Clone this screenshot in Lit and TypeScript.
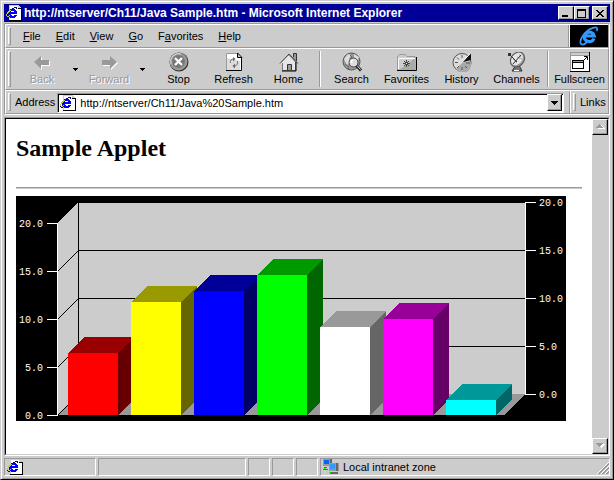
import { LitElement, html, svg, css, nothing } from "lit";
import { customElement } from "lit/decorators.js";

const pageIcon = html`<svg class="i16" viewBox="0 0 16 16" aria-hidden="true">
  <path d="M3 0H12L15 3V16H3Z" fill="#fff"/>
  <path d="M3.500 16V.5H12" fill="none" stroke="#ccc" shape-rendering="crispEdges"/>
  <path d="M3 15.500H15.500V3M12 .5V3.500H15" fill="none" stroke="#000" shape-rendering="crispEdges"/>
  <path d="M12 0H13V1H14V2H15V3H12Z" fill="#ccc" shape-rendering="crispEdges"/>
  <g shape-rendering="crispEdges">
    <path d="M4 4H9V5H10V6H11V9H5V10H6V11H8V10H11V11H10V12H9V13H4V12H3V11H2V6H3V5H4ZM5 6V7H8V6Z" fill="#00f" fill-rule="evenodd"/>
    <path d="M6 3H8V2H11V4H10V3H8V4H6ZM1 7H2V9H1ZM0 9H1V12H0ZM1 12H3V13H1Z" fill="#009"/>
    <path d="M3 5H5V6H4V7H3V8H2V9H1V11H0V9H1V7H2V6H3ZM1 11H3V12H1ZM3 10H4V11H3Z" fill="#cc3"/>
  </g>
</svg>`;

const icons: Record<string, unknown> = {
  Back: svg`<path d="M2 10 9 4V8H17V13H9V17Z" fill="#fff" transform="translate(1 1)"/><path d="M2 10 9 4V8H17V13H9V17Z" fill="#999"/>`,
  Forward: svg`<path d="M18 10 11 4V8H3V13H11V17Z" fill="#fff" transform="translate(1 1)"/><path d="M18 10 11 4V8H3V13H11V17Z" fill="#999"/>`,
  Stop: svg`<circle cx="10" cy="10" r="9.500" fill="#333"/>
    <circle cx="9.500" cy="9.500" r="9" fill="#999"/>
    <circle cx="9.500" cy="9.500" r="6.500" fill="#777"/>
    <path d="M2 12A8 8 0 0 1 12 2" fill="none" stroke="#ddd"/>
    <path d="M6 6 13 13M13 6 6 13" stroke="#fff" stroke-width="2.300"/>`,
  Refresh: svg`<path d="M2 1H13L18 6V19H2Z" fill="#fff"/><path d="M3 18V6L16 9V18Z" fill="#ddd"/>
    <path d="M2.500 19V1.500H13" fill="none" stroke="#999"/><path d="M13.500 1V5.500H18Z" fill="#ccc" stroke="#000"/>
    <path d="M17.500 5.500V18.500H2" fill="none" stroke="#000"/>
    <path d="M6.500 11C6 8 7 7 10 7M13.500 9C14 12 13 14 10 14" fill="none" stroke="#777"/>
    <path d="M9 5 11.500 7 9 9.500ZM11 11.500 8.500 14 11 16.500Z" fill="#666"/>`,
  Home: svg`<path d="M14 1H17V9H14Z" fill="#999"/><path d="M14.500 5V1.500H17.500V9" fill="none" stroke="#333"/>
    <path d="M3.500 10 10 3 16.500 10V18.500H3.500Z" fill="#e6e6e6" stroke="#777"/>
    <path d="M1 11.500 10 2 19 11.500" fill="none" stroke="#444"/>
    <path d="M2.500 11.500 10 3.500" stroke="#fff"/><path d="M17 10V19H3" fill="none" stroke="#000"/>
    <path d="M8.500 18V12.500H12.500V18" fill="#999" stroke="#333"/>`,
  Search: svg`<circle cx="9.500" cy="9.500" r="8.500" fill="#999" stroke="#555"/>
    <path d="M2 7 6 2 9 3 7 7 9 10 5 13ZM12 2 17 5 16 8 12 6Z" fill="#ddd"/>
    <path d="M8 3 10 5 8 8 11 9M3 12 7 15 6 18" fill="none" stroke="#666"/>
    <circle cx="11.500" cy="10.500" r="4.500" fill="#ddd" stroke="#444"/>
    <path d="M9.500 11V9L11 8" fill="none" stroke="#fff" stroke-width="1.500"/>
    <path d="M14.500 13.500 19 18.500" stroke="#222" stroke-width="3"/><path d="M15 13.500 18.500 17.500" stroke="#eee"/>`,
  Favorites: svg`<path d="M.5 18V4.500L2.500 2.500H8L10 4.500H18V18Z" fill="#ccc" stroke="#999"/>
    <path d="M2 18 18 6V18Z" fill="#aaa"/><path d="M1.500 17V6.500H18" fill="none" stroke="#fff"/>
    <path d="M0 18.500H19.500V5" fill="none" stroke="#000"/>
    <path d="M9.500 8V15M6 11.500H13M7 9 12 14M12 9 7 14" stroke="#444"/><rect x="9" y="11" width="1" height="1" fill="#fff"/>`,
  History: svg`<circle cx="10" cy="10.500" r="9" fill="#ddd" stroke="#555"/>
    <path d="M4 17A8 8 0 0 0 18 9L10 11Z" fill="#aaa"/>
    <path d="M10 3V6M3 10.500H6M10 15V18M14 11H18M5 5.500 7 7.500M5 16 7 14M15 16 13 14" stroke="#555"/>
    <path d="M10 10.500 19 1.500V8Z" fill="#111"/><path d="M10 10.500 18 1.500" stroke="#fff"/>`,
  Channels: svg`<path d="M9 13H12L15 19H5Z" fill="#777" stroke="#333"/><path d="M7 18.500H12" stroke="#fff"/>
    <ellipse cx="10.500" cy="7.500" rx="8" ry="6.500" transform="rotate(-50 10.500 7.500)" fill="#999" stroke="#555"/>
    <ellipse cx="10" cy="7" rx="7" ry="5" transform="rotate(-50 10 7)" fill="#e6e6e6"/>
    <path d="M12 2 14 5M6 7 10 11M10 5 15 7" stroke="#aaa"/>
    <path d="M2.500 2.500 10 10M6 12 14 3" stroke="#333"/><rect x="1" y="1" width="3" height="3" fill="#333"/>`,
  Fullscreen: svg`<g shape-rendering="crispEdges"><rect width="20" height="20" fill="#000"/><rect width="19" height="19" fill="#999"/>
    <rect x="1" y="4" width="18" height="15" fill="#fff"/><rect x="1" y="1" width="18" height="2" fill="#ccc"/>
    <rect x="2" y="8" width="12" height="9" fill="#000"/><rect x="3" y="11" width="10" height="5" fill="#fff"/><rect x="3" y="9" width="10" height="1" fill="#999"/></g>
    <path d="M13 9 17 5M14 4.500H17.500V8" fill="none" stroke="#000"/>`,
};

const menu = [["", "F", "ile"], ["", "E", "dit"], ["", "V", "iew"], ["", "G", "o"], ["F", "a", "vorites"], ["", "H", "elp"]];

const bars = [
  { top: 157, front: "#f00", lid: "#900", side: "#600" },
  { top: 106, front: "#ff0", lid: "#990", side: "#660" },
  { top: 95, front: "#00f", lid: "#009", side: "#006" },
  { top: 79, front: "#0f0", lid: "#090", side: "#060" },
  { top: 131, front: "#fff", lid: "#999", side: "#666" },
  { top: 123, front: "#f0f", lid: "#909", side: "#606" },
  { top: 204, front: "#0ff", lid: "#099", side: "#066" },
];

@customElement("bar-chart")
class BarChart extends LitElement {
  static styles = css`
    :host { display: block; max-width: 550px; }
    .chart { display: block; width: 100%; background: #000; }
    .num { font: 10px "Liberation Mono", monospace; fill: #fff; }
    .end { text-anchor: end; }
  `;
  render() {
    return html`<svg class="chart" viewBox="0 0 550 225" role="img" aria-label="Bar chart">
      <g shape-rendering="crispEdges">
        <path d="M41 27 62 7H509V198L488 219H41Z" fill="#ccc"/>
        <path d="M41 219 62 198H509L488 219Z" fill="#999"/>
        <path d="M62.500 7V198" stroke="#000" fill="none"/>
      </g>
      <path d="M41.500 219.500 62.500 198.500" stroke="#000"/>
      ${[0, 1, 2, 3, 4].map((n) => {
        const y = 219 - n * 48;
        const label = `${n * 5}.0`;
        return svg`
          ${n > 0 && n < 4 ? svg`<path d="M41.500 ${y + 0.5} 62.500 ${y - 20.5}H509" stroke="#000" fill="none"/>` : nothing}
          <rect x="31" y=${y} width="11" height="1" fill="#fff"/>
          <rect x="509" y=${y - 21} width="11" height="1" fill="#fff"/>
          <text class="num end" x="27" y=${y + 4}>${label}</text>
          <text class="num" x="523" y=${y - 17}>${label}</text>`;
      })}
      <path d="M41.500 27V219M509.500 6V199" stroke="#fff" shape-rendering="crispEdges"/>
      <g shape-rendering="crispEdges">${bars.map((b, i) => {
        const x = 52 + i * 63;
        return svg`
          <path d="M${x} ${b.top}l16 -16h50l-16 16z" fill=${b.lid}/>
          <path d="M${x + 50} ${b.top}l16 -16V203l-16 16z" fill=${b.side}/>
          <rect x=${x} y=${b.top} width="50" height=${219 - b.top} fill=${b.front}/>`;
      })}</g>
    </svg>`;
  }
}

@customElement("app-root")
class AppRoot extends LitElement {
  static styles = css`
    :host { display: block; font: 11px/14px "Liberation Sans", Arial, sans-serif; color: #000; }
    * { box-sizing: border-box; }
    button { font: inherit; color: inherit; background: none; border: 0; padding: 0; margin: 0; flex: none; }
    svg { flex: none; display: block; }
    .window { min-height: 100vh; display: flex; flex-direction: column; background: #ccc; padding: 3px; overflow: hidden;
      border: 1px solid; border-color: #ccc #000 #000 #ccc; box-shadow: inset 1px 1px #fff, inset -1px -1px #999; }
    .title { height: 18px; display: flex; align-items: center; background: #009; color: #fff; padding: 0 2px; gap: 2px; }
    .title h1 { flex: 1; min-width: 0; margin: 0; font: bold 12px/16px "Liberation Sans", Arial, sans-serif; white-space: nowrap; overflow: hidden; }
    .i16 { width: 16px; height: 16px; }
    .controls { display: flex; }
    .raised { background: #ccc; border: 1px solid; border-color: #fff #000 #000 #fff; box-shadow: inset -1px -1px #999;
      display: flex; align-items: center; justify-content: center; }
    .control { width: 16px; height: 14px; }
    .close { margin-left: 2px; }
    .bands { margin-top: 1px; border: 1px solid; border-color: #999 #fff #fff #999; }
    .band { display: flex; align-items: stretch; border: 1px solid; border-color: #fff #999 #999 #fff; height: 24px; }
    .tools { height: 42px; }
    .grip { flex: none; width: 3px; margin: 2px; border: 1px solid; border-color: #fff #999 #999 #fff; }
    .menu { flex: 1; display: flex; align-items: center; gap: 1px; padding-left: 3px; }
    .menu button { padding: 0 7px; }
    .logo { width: 40px; border: 1px solid #999; border-width: 0 0 0 1px; background: #000; box-shadow: inset 1px 0 #fff; display: flex; justify-content: center; align-items: center; }
    .tool { width: 55px; display: flex; flex-direction: column; align-items: center; padding-top: 3px; }
    .tool svg { width: 20px; height: 20px; }
    .nav { width: 50px; }
    .off { color: #999; text-shadow: 1px 1px #fff; }
    .tools .grip { margin-right: 6px; }
    .caret { width: 17px; display: flex; align-items: center; justify-content: center; }
    .rule { flex: none; width: 2px; margin: 2px 3px; background: #fff; border-left: 1px solid #999; }
    .address { flex: 1; min-width: 0; display: flex; align-items: center; padding-right: 5px; }
    .address label { margin: 0 2px; }
    .field { flex: 1; min-width: 0; height: 20px; margin-top: 1px; display: flex; align-items: center; background: #fff; padding: 0 1px 0 2px;
      border: 1px solid; border-color: #999 #fff #fff #999; box-shadow: inset 1px 1px #000; }
    .field input { flex: 1; min-width: 0; font: inherit; border: 0; padding: 0 0 0 4px; background: transparent; outline: 0; }
    .drop { width: 15px; height: 17px; }
    .links { width: 39px; display: flex; align-items: center; align-self: stretch; border-left: 1px solid #999; box-shadow: inset 1px 0 #fff; padding-left: 1px; }
    .links .grip { align-self: stretch; }
    .links button { margin-left: 2px; }
    .view { flex: 1; margin-top: 2px; display: flex; background: #fff; border: 1px solid; border-color: #999 #fff #fff #999; }
    .inner { flex: 1; min-width: 0; display: flex; border: 1px solid; border-color: #000 #ccc #ccc #000; }
    .doc { flex: 1; min-width: 0; padding: 15px 10px 10px; }
    .doc h2 { margin: 0; font: bold 24px/28px "Liberation Serif", "Times New Roman", serif; }
    .doc hr { margin: 25px 0 7px; height: 2px; border: 0; border-top: 1px solid #999; background: #ccc; }
    .scroll { flex: none; width: 16px; background: #ccc; display: flex; flex-direction: column; justify-content: space-between; }
    .scroll button { width: 16px; height: 16px; }
    .status { margin-top: 2px; height: 18px; display: flex; gap: 2px; }
    .cell { border: 1px solid; border-color: #999 #fff #fff #999; width: 22px; display: flex; align-items: center; padding-left: 2px; gap: 4px; }
    .first { width: 92px; }
    .message { width: 148px; }
    .zone { flex: 1; }
    .zone span { flex: 1; }
  `;

  tool(name: string, off = false) {
    return html`<button class="tool ${off ? "off nav" : ""}" ?disabled=${off}>
      <svg viewBox="0 0 20 20" aria-hidden="true">${icons[name]}</svg><span>${name}</span>
    </button>`;
  }

  caret(label: string) {
    return html`<button class="caret" aria-label=${label}><svg width="5" height="3" shape-rendering="crispEdges"><path d="M0 0H5V1H4V2H3V3H2V2H1V1H0Z"/></svg></button>`;
  }

  render() {
    return html`<div class="window">
      <header class="title">
        ${pageIcon}
        <h1>http://ntserver/Ch11/Java Sample.htm - Microsoft Internet Explorer</h1>
        <div class="controls">
          <button class="raised control" aria-label="Minimize"><svg width="10" height="9" shape-rendering="crispEdges"><path d="M1 6H7V8H1Z"/></svg></button>
          <button class="raised control" aria-label="Maximize"><svg width="10" height="9" shape-rendering="crispEdges"><path d="M0 0H9V9H0ZM1 2V8H8V2Z" fill-rule="evenodd"/></svg></button>
          <button class="raised control close" aria-label="Close"><svg width="8" height="7" shape-rendering="crispEdges"><path d="M0 0H2V1H3V2H5V1H6V0H8V1H7V2H6V3H5V4H6V5H7V6H8V7H6V6H5V5H3V6H2V7H0V6H1V5H2V4H3V3H2V2H1V1H0Z"/></svg></button>
        </div>
      </header>
      <div class="bands">
        <div class="band">
          <div class="grip"></div>
          <nav class="menu">${menu.map(([a, k, b]) => html`<button>${a}<u>${k}</u>${b}</button>`)}</nav>
          <div class="logo"><svg width="20" height="20" viewBox="0 0 20 20" aria-hidden="true">
            <path d="M15 12.500A5 4.800 0 1 1 15.200 10H7" fill="none" stroke="#39f" stroke-width="3.200"/>
            <path d="M2 18C-.5 14 6 4.500 14 1.800C18 .8 19 2 17.500 5M2 18C3.500 19.200 6 18 8 16" fill="none" stroke="#39f" stroke-width="1.800"/>
          </svg></div>
        </div>
        <div class="band tools">
          <div class="grip"></div>
          ${this.tool("Back", true)}${this.caret("Back list")}${this.tool("Forward", true)}${this.caret("Forward list")}
          ${this.tool("Stop")}${this.tool("Refresh")}${this.tool("Home")}
          <div class="rule"></div>
          ${this.tool("Search")}${this.tool("Favorites")}${this.tool("History")}${this.tool("Channels")}
          <div class="rule"></div>
          ${this.tool("Fullscreen")}
        </div>
        <div class="band">
          <div class="grip"></div>
          <div class="address">
            <label for="url">Address</label>
            <div class="field">
              ${pageIcon}
              <input id="url" type="text" spellcheck="false" value="http://ntserver/Ch11/Java%20Sample.htm">
              <button class="raised drop" aria-label="Show addresses"><svg width="7" height="4" shape-rendering="crispEdges"><path d="M0 0H7V1H6V2H5V3H4V4H3V3H2V2H1V1H0Z"/></svg></button>
            </div>
          </div>
          <div class="links"><div class="grip"></div><button>Links</button></div>
        </div>
      </div>
      <div class="view"><div class="inner">
        <main class="doc">
          <h2>Sample Applet</h2>
          <hr>
          <bar-chart></bar-chart>
        </main>
        <div class="scroll">
          <button class="raised" aria-label="Scroll up" disabled><svg width="9" height="6" shape-rendering="crispEdges"><path d="M1 5H9L5 1Z" fill="#fff"/><path d="M0 4H7L3.500 0Z" fill="#999"/></svg></button>
          <button class="raised" aria-label="Scroll down" disabled><svg width="9" height="6" shape-rendering="crispEdges"><path d="M1 1H9L5 5Z" fill="#fff"/><path d="M0 0H7L3.500 4Z" fill="#999"/></svg></button>
        </div>
      </div></div>
      <footer class="status">
        <div class="cell first">${pageIcon}</div>
        <div class="cell message"></div>
        <div class="cell"></div><div class="cell"></div><div class="cell"></div>
        <div class="cell zone">
          <svg class="i16" viewBox="0 0 16 16" aria-hidden="true" shape-rendering="crispEdges">
            <path d="M0 0H9V7H0Z" fill="#999"/><path d="M1 1H6V5H1Z" fill="#06f"/><path d="M7 0H9V7H7Z" fill="#666"/>
            <path d="M6 4H16V12H6Z" fill="#999"/><path d="M7 5H12V10H7Z" fill="#39f"/><path d="M13 4H15V12H13ZM7 13H15V15H7Z" fill="#666"/>
            <path d="M1 8H4V9H1ZM0 10H5V11H0Z" fill="#666"/><path d="M1 9H3V10H1ZM6 13H8V14H6Z" fill="#0f0"/><path d="M4 12H5V15H4Z" fill="#fc0"/>
          </svg>
          <span>Local intranet zone</span>
          <svg width="13" height="14" viewBox="0 0 13 14" aria-hidden="true"><path d="M1 14 13 2M5 14 13 6M9 14 13 10" stroke="#fff"/><path d="M2 14 13 3M3 14 13 4M6 14 13 7M7 14 13 8M10 14 13 11M11 14 13 12" stroke="#999"/></svg>
        </div>
      </footer>
    </div>`;
  }
}
